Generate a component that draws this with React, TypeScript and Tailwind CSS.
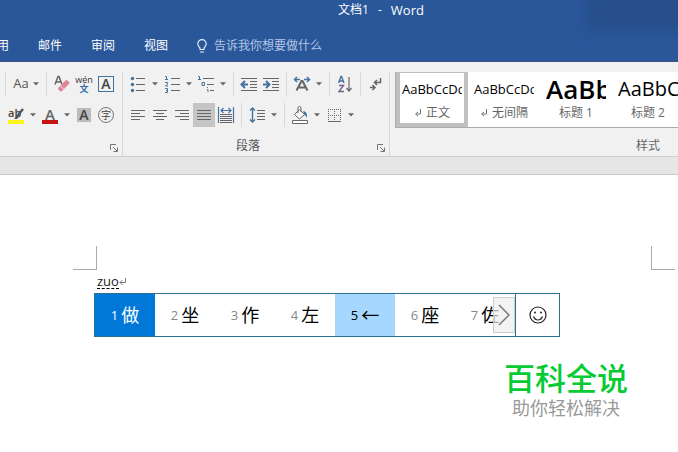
import { ReactNode, useState } from 'react';
import clsx from 'clsx';

interface ToolButtonProps {
  label: string;
  children: ReactNode;
  active?: boolean;
  dropdown?: boolean;
}

interface StyleItem {
  name: string;
  preview: string;
  previewClass: string;
  paragraph?: boolean;
}

const tabs = ['用', '邮件', '审阅', '视图'];

const styleItems: StyleItem[] = [
  { name: '正文', preview: 'AaBbCcDd', previewClass: 'text-[13px]', paragraph: true },
  { name: '无间隔', preview: 'AaBbCcDd', previewClass: 'text-[13px]', paragraph: true },
  { name: '标题 1', preview: 'AaBb', previewClass: 'text-[26px] font-semibold' },
  { name: '标题 2', preview: 'AaBbC', previewClass: 'text-[20px]' },
];

const candidates = ['做', '坐', '作', '左', '←', '座', '佐'];

const Caret = (): JSX.Element => (
  <svg className="w-[6px] h-[4px] shrink-0" viewBox="0 0 6 4" aria-hidden="true">
    <path d="M0 0.3h6L3 3.6z" fill="#666" />
  </svg>
);

const ToolButton = ({ label, children, active = false, dropdown = false }: ToolButtonProps): JSX.Element => (
  <div className="flex shrink-0">
    <button
      type="button"
      aria-label={label}
      aria-pressed={active}
      className={clsx('flex h-6 w-[22px] items-center justify-center', active && 'bg-[#c5c5c5]')}
    >
      {children}
    </button>
    {dropdown && (
      <button type="button" aria-label={`${label}选项`} className="flex h-6 w-3 items-center justify-center">
        <Caret />
      </button>
    )}
  </div>
);

const Separator = (): JSX.Element => <div className="mx-1 h-6 w-px shrink-0 bg-[#d8d8d8]" />;

const Icon = ({ children }: { children: ReactNode }): JSX.Element => (
  <svg
    className="h-[18px] w-[18px] shrink-0"
    viewBox="0 0 18 18"
    fill="none"
    stroke="#666"
    strokeWidth={1}
    aria-hidden="true"
  >
    {children}
  </svg>
);

const Launcher = ({ label }: { label: string }): JSX.Element => (
  <button type="button" aria-label={label} className="h-2 w-2">
    <svg className="h-2 w-2" viewBox="0 0 8 8" fill="none" stroke="#777" aria-hidden="true">
      <path d="M0.5 6V0.5H6M3 3l4 4M7.5 3.5v4h-4" />
    </svg>
  </button>
);

const FontGroup = (): JSX.Element => (
  <section aria-label="字体" className="flex w-[123px] shrink-0 flex-col border-r border-[#d8d8d8] pl-[5px] pr-1">
    <div className="flex items-center">
      <div className="h-6 w-px bg-[#d8d8d8]" />
      <button type="button" aria-label="更改大小写" className="flex h-6 w-10 items-center justify-center gap-1 text-[13px] text-[#555]">
        Aa
        <Caret />
      </button>
      <div className="mr-1 h-6 w-px bg-[#d8d8d8]" />
      <ToolButton label="清除所有格式">
        <Icon>
          <path d="M2 9.500L5 1.500h1L9 9.500M3 7h5" stroke="#666" strokeWidth={1.500} />
          <path d="M5.500 12.500l7-7q1-1 2 0l1.500 1.500q1 1 0 2l-7 7q-1 1-2 0l-1.500-1.500q-1-1 0-2z" fill="#dd8797" stroke="none" />
          <path d="M7 10.500l4 4" stroke="#f1f1f1" />
        </Icon>
      </ToolButton>
      <ToolButton label="拼音指南">
        <span className="flex flex-col items-center">
          <span className="text-[9px] leading-[9px] text-[#333]">wén</span>
          <span className="text-[9px] leading-[9px] font-bold text-[#2f6cab]">文</span>
        </span>
      </ToolButton>
      <ToolButton label="字符边框">
        <span className="flex h-4 w-4 items-center justify-center border border-[#44739e] text-[14px] leading-none font-semibold text-[#444]">
          A
        </span>
      </ToolButton>
    </div>
    <div className="mt-[7px] flex items-center">
      <ToolButton label="突出显示文本" dropdown>
        <span className="relative flex h-[17px] w-4 border-b-4 border-[#fcf51c] text-[11px] leading-[11px] font-semibold text-[#444]">
          ab
          <svg className="absolute right-0 bottom-0 h-3 w-3" viewBox="0 0 12 12" aria-hidden="true">
            <path d="M11 1L6 7" stroke="#555" strokeWidth={2.500} />
            <path d="M6 6l-4 5h3l3-3z" fill="#555" />
          </svg>
        </span>
      </ToolButton>
      <ToolButton label="字体颜色" dropdown>
        <span className="flex h-[17px] w-4 justify-center border-b-4 border-[#c41414] text-[15px] leading-[14px] font-semibold text-[#666]">
          A
        </span>
      </ToolButton>
      <ToolButton label="字符底纹">
        <span className="flex h-[14px] w-[14px] items-center justify-center bg-[#bbb] text-[14px] leading-none font-semibold text-[#444]">
          A
        </span>
      </ToolButton>
      <ToolButton label="带圈字符">
        <span className="flex h-4 w-4 shrink-0 items-center justify-center rounded-full border border-[#777] text-[10px] leading-none text-[#444]">
          字
        </span>
      </ToolButton>
    </div>
    <div className="mt-auto flex justify-end pb-1">
      <Launcher label="字体设置" />
    </div>
  </section>
);

const ParagraphGroup = (): JSX.Element => (
  <section aria-label="段落" className="flex w-[267px] shrink-0 flex-col border-r border-[#d8d8d8] pl-1 pr-1">
    <div className="flex items-center">
      <ToolButton label="项目符号" dropdown>
        <Icon>
          <path d="M7 3.500h9M7 9.500h9M7 15.500h9" />
          <g fill="#44739e" stroke="none">
            <circle cx="3.500" cy="3.500" r="1.700" />
            <circle cx="3.500" cy="9.500" r="1.700" />
            <circle cx="3.500" cy="15.500" r="1.700" />
          </g>
        </Icon>
      </ToolButton>
      <ToolButton label="编号" dropdown>
        <Icon>
          <path d="M8 3.500h9M8 9.500h9M8 15.500h9" />
          <path
            d="M2 1.500h1.500V4M2 4.500h3M2 7.500h2.500v1.500L2.500 11H5M2 13.500h2.500v4H2M3 15.500h1.500"
            stroke="#44739e"
          />
        </Icon>
      </ToolButton>
      <ToolButton label="多级列表" dropdown>
        <Icon>
          <path d="M6 3.500h11M10 9.500h7M13 15.500h4" />
          <path d="M1 1.500h1.500V4M1 4.500h3M5 7.500h2.500v3H5zM10.500 12v1M10 14.500h1V17" stroke="#44739e" />
        </Icon>
      </ToolButton>
      <Separator />
      <ToolButton label="减少缩进量">
        <Icon>
          <path d="M1 3.500h16M10 6.500h7M10 9.500h7M10 12.500h7M1 15.500h16" />
          <path d="M8 9.500H2M5 6L1.500 9.500 5 13" stroke="#44739e" strokeWidth={2} />
        </Icon>
      </ToolButton>
      <ToolButton label="增加缩进量">
        <Icon>
          <path d="M1 3.500h16M10 6.500h7M10 9.500h7M10 12.500h7M1 15.500h16" />
          <path d="M1 9.500h6M4 6l3.500 3.500L4 13" stroke="#44739e" strokeWidth={2} />
        </Icon>
      </ToolButton>
      <Separator />
      <ToolButton label="中文版式" dropdown>
        <Icon>
          <path d="M3.500 15.500L8.500 6h1l5 9.500M5.500 12.500h7" strokeWidth={2} />
          <path d="M7 4.500H1.500M4 2L1.500 4.500 4 7M11 4.500h5.500M14 2l2.500 2.500L14 7" stroke="#44739e" strokeWidth={1.500} />
        </Icon>
      </ToolButton>
      <Separator />
      <ToolButton label="排序">
        <Icon>
          <path d="M2.500 8L5 1.500h0.500L8 8M3.500 6h4" stroke="#44739e" strokeWidth={1.400} />
          <path d="M3 10.500h4.500L3 16.500h5" stroke="#77608c" strokeWidth={1.400} />
          <path d="M13 2v14M10.500 13l2.500 3 2.500-3" strokeWidth={1.200} />
        </Icon>
      </ToolButton>
      <Separator />
      <ToolButton label="显示编辑标记">
        <Icon>
          <path d="M13.500 3v4.500H8M10 5L7.500 7.500 10 10M3 12.500h5M5.500 10l2.500 2.500-2.500 2.500" strokeWidth={1.500} />
        </Icon>
      </ToolButton>
    </div>
    <div className="mt-[7px] flex items-center">
      <ToolButton label="左对齐">
        <Icon>
          <path d="M2 4.500h14M2 7.500h9M2 10.500h14M2 13.500h9" />
        </Icon>
      </ToolButton>
      <ToolButton label="居中">
        <Icon>
          <path d="M2 4.500h14M5 7.500h8M2 10.500h14M5 13.500h8" />
        </Icon>
      </ToolButton>
      <ToolButton label="右对齐">
        <Icon>
          <path d="M2 4.500h14M7 7.500h9M2 10.500h14M7 13.500h9" />
        </Icon>
      </ToolButton>
      <ToolButton label="两端对齐" active>
        <Icon>
          <path d="M2 4.500h14M2 7.500h14M2 10.500h14M2 13.500h14" />
        </Icon>
      </ToolButton>
      <ToolButton label="分散对齐">
        <Icon>
          <path d="M3 8.500h12M3 10.500h12M3 12.500h12M3 14.500h12M3 16.500h12" />
          <path d="M1.500 1v16M16.500 1v16M4 4.500h10M6.500 2L4 4.500 6.500 7M11.500 2L14 4.500 11.500 7" stroke="#44739e" strokeWidth={1.200} />
        </Icon>
      </ToolButton>
      <Separator />
      <ToolButton label="行距" dropdown>
        <Icon>
          <path d="M9 4.500h8M9 7.500h8M9 10.500h8M9 13.500h8" />
          <path d="M4.500 2v14M2 4.500L4.500 2 7 4.500M2 13.500L4.500 16 7 13.500" stroke="#44739e" strokeWidth={1.400} />
        </Icon>
      </ToolButton>
      <Separator />
      <ToolButton label="底纹" dropdown>
        <Icon>
          <path d="M8.500 3.500l5 5-5 4.500-5-4.500zM7 7V2q0-1.500 1.500-1.500T10 2v4" fill="#f8f8f8" />
          <path d="M12 5q4.500 0 4 7-1-2.500-2.500-3z" fill="#44739e" stroke="none" />
          <path d="M1.500 14.500h15v3h-15z" fill="#fff" />
        </Icon>
      </ToolButton>
      <ToolButton label="边框" dropdown>
        <Icon>
          <path d="M3 3.500h13M3 9.500h13M3.500 3v12M9.500 3v12M15.500 3v12" strokeDasharray="1 1" />
          <path d="M3 15.500h13" />
        </Icon>
      </ToolButton>
    </div>
    <div className="mt-auto flex items-end pb-1 pl-2">
      <span className="flex-1 pr-4 text-center text-[12px] leading-[12px] text-[#555]">段落</span>
      <Launcher label="段落设置" />
    </div>
  </section>
);

const StylesGroup = (): JSX.Element => {
  const [selected, setSelected] = useState('正文');
  return (
    <section aria-label="样式" className="flex min-w-0 flex-1 flex-col overflow-hidden pl-[5px]">
      <div className="-mt-1 flex h-[60px] w-full overflow-hidden border border-r-0 border-[#ababab] bg-white">
        {styleItems.map((item) => (
          <button
            key={item.name}
            type="button"
            onClick={() => setSelected(item.name)}
            className={clsx(
              'flex w-[72px] shrink-0 flex-col items-center border-4 px-[2px]',
              selected === item.name ? 'border-[#c0c0c0]' : 'border-transparent'
            )}
          >
            <span className={clsx('flex h-8 w-full items-center overflow-hidden leading-[28px] whitespace-nowrap text-black', item.previewClass)}>
              {item.preview}
            </span>
            <span className="flex items-center gap-1 text-[12px] leading-[16px] whitespace-nowrap text-[#666]">
              {item.paragraph && (
                <svg className="h-2 w-2" viewBox="0 0 8 8" fill="none" stroke="#777" aria-hidden="true">
                  <path d="M6.500 0v5H2M4 3L1.500 5 4 7" />
                </svg>
              )}
              {item.name}
            </span>
          </button>
        ))}
      </div>
      <div className="mt-auto pb-1 pl-[241px] text-[12px] leading-[12px] whitespace-nowrap text-[#666]">样式</div>
    </section>
  );
};

const CandidateBar = (): JSX.Element => (
  <div className="ml-[94px] flex h-11 w-fit border border-[#2c6f94] bg-white">
    <ol className="relative flex overflow-hidden">
      {candidates.map((char, index) => (
        <li
          key={char}
          className={clsx(
            'flex w-[60px] items-center justify-center gap-[3px] text-[18px]',
            index === 0 && 'bg-[#0078d7] text-white',
            index === 4 && 'bg-[#a6d8ff]',
            index !== 0 && 'text-black'
          )}
        >
          <span className={clsx('pt-[2px] text-[13px]', index !== 0 && index !== 4 && 'text-[#888]')}>{index + 1}</span>
          {char}
        </li>
      ))}
      <li className="absolute top-[3px] right-0">
        <button
          type="button"
          aria-label="下一页"
          className="flex h-9 w-[22px] items-center justify-center border border-[#ccc] bg-[#eee]/70"
        >
          <svg className="h-[22px] w-3 shrink-0" viewBox="0 0 12 22" fill="none" stroke="#777" strokeWidth={1.500} aria-hidden="true">
            <path d="M1 1l10 10L1 21" />
          </svg>
        </button>
      </li>
    </ol>
    <button type="button" aria-label="表情" className="flex w-11 items-center justify-center border-l border-[#2c6f94]">
      <svg className="h-[18px] w-[18px]" viewBox="0 0 18 18" fill="none" stroke="#222" strokeWidth={1.200} aria-hidden="true">
        <circle cx="9" cy="9" r="8" />
        <path d="M4.500 10.500q1.500 3.500 4.500 3.500t4.500-3.500" />
        <circle cx="6" cy="6.500" r="1" fill="#222" stroke="none" />
        <circle cx="12" cy="6.500" r="1" fill="#222" stroke="none" />
      </svg>
    </button>
  </div>
);

const App = (): JSX.Element => (
  <div className="min-h-screen w-full overflow-hidden bg-white font-['Open_Sans','Noto_Sans_CJK_SC',sans-serif]">
    <header className="relative overflow-hidden border-b border-[#3a5784] bg-[#2a579a] text-[12px] text-white">
      {/* 模糊处理的账户区域 */}
      <div className="absolute -top-2 -right-3 h-10 w-26 rounded-lg bg-[#264f8b] blur-[6px]" />
      <h1 className="relative flex h-[30px] items-start justify-center gap-[9px] pt-[2px] pl-[84px] leading-4">
        <span>文档1</span>
        <span>-</span>
        <span className="text-[13px]">Word</span>
      </h1>
      <nav className="flex h-[31px] gap-[29px] overflow-hidden leading-[30px]">
        {tabs.map((tab, index) => (
          <button key={tab} type="button" className={clsx('shrink-0', index === 0 && '-ml-[3px]')}>
            {tab}
          </button>
        ))}
        <label className="flex flex-1 items-center gap-[7px]">
          <svg className="h-[14px] w-[10px] shrink-0" viewBox="0 0 10 14" fill="none" stroke="#e8eef8" strokeWidth={1.200} aria-hidden="true">
            <path d="M3 10.500V9Q0.800 7 0.800 4.800a4.200 4.200 0 0 1 8.400 0Q9.200 7 7 9v1.500zM3 13h4" />
          </svg>
          <input
            type="text"
            aria-label="操作说明搜索"
            placeholder="告诉我你想要做什么"
            className="w-full bg-transparent text-[12px] outline-none placeholder:text-[#b4c6e4]"
          />
        </label>
      </nav>
    </header>

    <div className="flex h-[95px] border-b border-[#d0d0d0] bg-[#f1f1f1] pt-[10px]">
      <FontGroup />
      <ParagraphGroup />
      <StylesGroup />
    </div>
    <div className="h-[18px] border-b border-[#c9c9c9] bg-[#e6e6e6]" />

    <main className="pt-[71px]">
      <div className="flex justify-between pr-[3px] pl-[73px]">
        <div className="h-6 w-6 border-r border-b border-[#aaa]" />
        <div className="h-6 w-6 border-b border-l border-[#aaa]" />
      </div>
      <p className="flex h-[23px] items-center pl-[97px] text-[13px] leading-[14px] text-[#222]">
        <span className="border-b border-dashed border-black">zuo</span>
        <svg className="h-2 w-2" viewBox="0 0 8 8" fill="none" stroke="#777" aria-hidden="true">
          <path d="M6.500 0v4.500H1M3.500 2L1 4.500 3.500 7" />
        </svg>
      </p>
      <CandidateBar />
      <div className="mt-[23px] mr-[50px] flex flex-col items-end">
        <div className="flex flex-col items-center">
          <strong className="text-[31px] leading-9 font-medium text-[#06cb35]">百科全说</strong>
          <span className="text-[18px] leading-6 text-[#999]">助你轻松解决</span>
        </div>
      </div>
    </main>
  </div>
);

export default App;
